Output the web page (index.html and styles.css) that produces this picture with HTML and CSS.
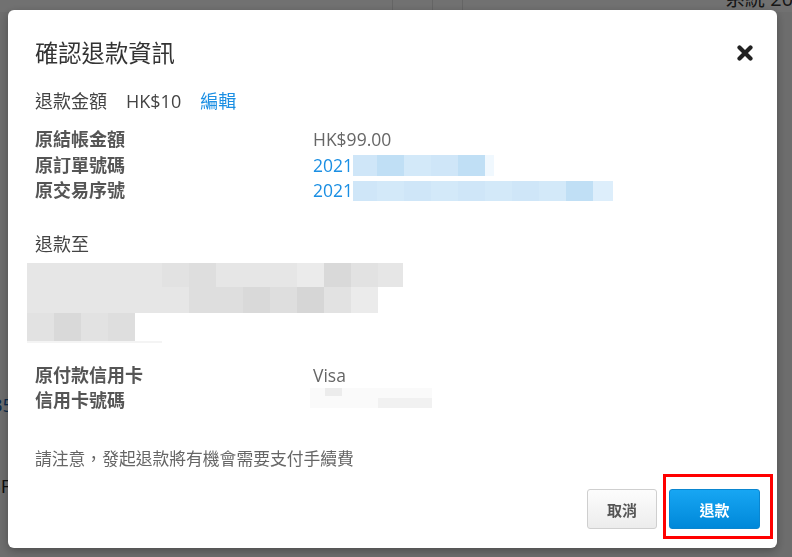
FILE: index.html
```html
<!DOCTYPE html>
<html lang="zh-Hant">
<head>
    <meta charset="UTF-8">
    <meta name="viewport" content="width=device-width, initial-scale=1.0">
    <title>確認退款資訊</title>
    <link rel="stylesheet" href="styles.css">
</head>
<body>

    <!-- Page behind the dialog -->
    <div class="page">
        <div class="page-top">
            <span class="page-col"></span>
            <span class="page-col"></span>
            <span class="page-col"></span>
            <span class="page-sys">系統 2021-03-</span>
        </div>
        <div class="page-body">
            <div class="page-num">1235</div>
            <div class="page-floor">5F</div>
        </div>
    </div>

    <div class="overlay">
        <div class="modal">
            <div class="modal-header">
                <h2>確認退款資訊</h2>
                <button class="close-btn" aria-label="關閉">
                    <svg width="16" height="16" viewBox="0 0 16 16">
                        <path d="M2.5 2.5 L13.5 13.5 M13.5 2.5 L2.5 13.5" stroke="#222" stroke-width="4.2" stroke-linecap="round"/>
                    </svg>
                </button>
            </div>

            <div class="modal-body">
                <div class="amount-row">
                    <span>退款金額</span>
                    <span>HK$10</span>
                    <a href="#" class="link">編輯</a>
                </div>

                <div class="info">
                    <div class="info-label">原結帳金額</div>
                    <div class="info-value">HK$99.00</div>
                    <div class="info-label">原訂單號碼</div>
                    <div class="info-value link">2021<span class="mask"><i class="b1"></i><i class="b2"></i><i class="b3"></i><i class="b1"></i><i class="b2"></i><i class="b4 short"></i></span></div>
                    <div class="info-label">原交易序號</div>
                    <div class="info-value link">2021<span class="mask thin"><i class="b1"></i><i class="b3"></i><i class="b1"></i><i class="b3"></i><i class="b1"></i><i class="b3"></i><i class="b1"></i><i class="b3"></i><i class="b2"></i><i class="b5 short"></i></span></div>
                </div>

                <div class="section-title">退款至</div>
                <div class="blur-block">
                    <div class="blur-row r1">
                        <i class="g1"></i><i class="g1"></i><i class="g1"></i><i class="g1"></i><i class="g1"></i>
                        <i class="g2"></i><i class="g3"></i><i class="g1"></i><i class="g1"></i><i class="g1"></i>
                        <i class="g5"></i><i class="g4"></i><i class="g2"></i><i class="g1 short"></i>
                    </div>
                    <div class="blur-row r2">
                        <i class="g1"></i><i class="g1"></i><i class="g1"></i><i class="g1"></i><i class="g1"></i>
                        <i class="g1"></i><i class="g3"></i><i class="g3"></i><i class="g4"></i><i class="g3"></i>
                        <i class="g6"></i><i class="g2"></i><i class="g5"></i>
                    </div>
                    <div class="blur-row r3">
                        <i class="g2"></i><i class="g4"></i><i class="g2"></i><i class="g3"></i>
                    </div>
                    <div class="blur-edge"></div>
                </div>

                <div class="info card">
                    <div class="info-label">原付款信用卡</div>
                    <div class="info-value">Visa</div>
                    <div class="info-label">信用卡號碼</div>
                    <div class="info-value">
                        <span class="card-mask">
                            <span class="cm-top"><i></i></span>
                            <span class="cm-bottom"><i></i></span>
                        </span>
                    </div>
                </div>

                <p class="note">請注意，發起退款將有機會需要支付手續費</p>
            </div>

            <div class="modal-footer">
                <button class="btn btn-cancel">取消</button>
                <button class="btn btn-refund">退款</button>
            </div>
        </div>
    </div>

</body>
</html>
```

FILE: styles.css
```css
/* General Styles */
* {
    box-sizing: border-box;
}

body {
    margin: 0;
    padding: 0;
    font-family: "Open Sans", "Noto Sans CJK TC", sans-serif;
    background-color: #f2f2f2;
    overflow: hidden;
}

/* Page behind the dialog */
.page {
    height: 557px;
}

.page-top {
    height: 12px;
    display: flex;
    overflow: hidden;
    background-color: #fafafa;
}

.page-col {
    border-left: 1px solid #e0e0e0;
}

.page-col:nth-child(1) { margin-left: 392px; width: 40px; }
.page-col:nth-child(2) { width: 30px; }
.page-col:nth-child(3) { flex: 1; }

.page-sys {
    width: 67px;
    font-size: 20px;
    line-height: 20px;
    margin-top: -11px;
    color: #333;
    white-space: nowrap;
}

.page-body {
    padding-top: 380px;
}

.page-num {
    margin-left: -30px;
    font-size: 19px;
    color: #1a5fa8;
}

.page-floor {
    margin-top: 55px;
    margin-left: -10px;
    font-size: 19px;
    color: #222;
}

/* Dialog */
.overlay {
    position: fixed;
    top: 0;
    left: 0;
    right: 0;
    bottom: 0;
    background-color: rgba(0, 0, 0, 0.55);
    padding: 10px 15px 9px 8px;
}

.modal {
    height: 538px;
    background-color: white;
    border-radius: 6px;
    box-shadow: 0 3px 10px rgba(0, 0, 0, 0.3);
    padding: 28px 17px 19px 19px;
    display: flex;
    flex-direction: column;
}

.modal-header {
    display: flex;
    justify-content: space-between;
    align-items: center;
    padding-left: 8px;
    padding-right: 7px;
}

.modal-header h2 {
    margin: 0;
    font-size: 23.3px;
    line-height: 30px;
    font-weight: 400;
    color: #333;
}

.close-btn {
    border: none;
    background: none;
    padding: 0;
    width: 16px;
    height: 16px;
    cursor: pointer;
}

.close-btn svg {
    display: block;
}

.modal-body {
    flex: 1;
    color: #555;
}

.amount-row {
    display: flex;
    gap: 19px;
    margin-top: 20px;
    padding-left: 8px;
    font-size: 18px;
    line-height: 26px;
    color: #444;
}

.link {
    color: #1b8fe3;
    text-decoration: none;
}

/* Label / value rows */
.info {
    display: grid;
    grid-template-columns: 278px 1fr;
    margin-top: 13px;
    padding-left: 8px;
    font-size: 18px;
    line-height: 25.5px;
}

.info-label {
    font-weight: 700;
    color: #555;
}

.info-value {
    color: #666;
    font-size: 17.5px;
    white-space: nowrap;
}

.info-value.link {
    color: #1b8fe3;
}

.mask {
    display: inline-flex;
    vertical-align: middle;
    height: 21px;
    margin-top: -3px;
}

.mask.thin {
    height: 20px;
}

.mask i {
    width: 27px;
    height: 100%;
}

.mask i.short {
    width: 9px;
}

.mask.thin i.short {
    width: 20px;
}

.mask i:first-child {
    width: 24px;
}

.b1 { background-color: #cfe6f8; }
.b2 { background-color: #c0dff5; }
.b3 { background-color: #d3e9f9; }
.b4 { background-color: #f0f8fe; }
.b5 { background-color: #ddeefb; }

.section-title {
    margin-top: 27px;
    padding-left: 8px;
    font-size: 18px;
    line-height: 26px;
    color: #444;
}

/* Blurred account details */
.blur-block {
    margin-top: 6px;
}

.blur-row {
    display: flex;
}

.blur-row i {
    width: 27px;
}

.blur-row i.short {
    width: 25px;
}

.r1 { height: 24px; }
.r2 { height: 26px; }
.r3 { height: 28px; }

.g1 { background-color: #e6e6e6; }
.g2 { background-color: #e2e2e2; }
.g3 { background-color: #dedede; }
.g4 { background-color: #d9d9d9; }
.g5 { background-color: #ebebeb; }
.g6 { background-color: #d6d6d6; }

.blur-edge {
    width: 135px;
    height: 2px;
    background-color: #f4f4f4;
}

.info.card {
    margin-top: 20px;
    line-height: 25px;
}

.card-mask {
    display: inline-flex;
    flex-direction: column;
    vertical-align: top;
    width: 122px;
    margin-left: -3px;
    margin-top: 0;
}

.cm-top,
.cm-bottom {
    display: block;
    height: 10px;
    background-color: #fafafa;
}

.cm-top i {
    display: block;
    margin-left: 15px;
    width: 17px;
    height: 8px;
    background-color: #ececec;
}

.cm-bottom i {
    display: block;
    margin-left: 68px;
    width: 54px;
    height: 10px;
    background-color: #f1f1f1;
}

.note {
    margin: 34px 0 0;
    padding-left: 8px;
    font-size: 16.8px;
    line-height: 24px;
    color: #666;
}

/* Footer buttons */
.modal-footer {
    display: flex;
    justify-content: flex-end;
    gap: 12px;
}

.btn {
    height: 40px;
    border-radius: 3px;
    font-family: "Noto Sans CJK TC", sans-serif;
    font-size: 15px;
    font-weight: 700;
    cursor: pointer;
}

.btn-cancel {
    width: 70px;
    color: #555;
    background: linear-gradient(#fdfdfd, #ececec);
    border: 1px solid #cfcfcf;
}

.btn-refund {
    position: relative;
    width: 91px;
    color: white;
    border: 1px solid #0a86d0;
    background: linear-gradient(#17a6f3, #0088d9);
}

/* Highlight frame around the refund button */
.btn-refund::after {
    content: "";
    position: absolute;
    top: -16px;
    left: -7px;
    right: -14px;
    bottom: -11px;
    border: 3px solid #f00;
}
```
